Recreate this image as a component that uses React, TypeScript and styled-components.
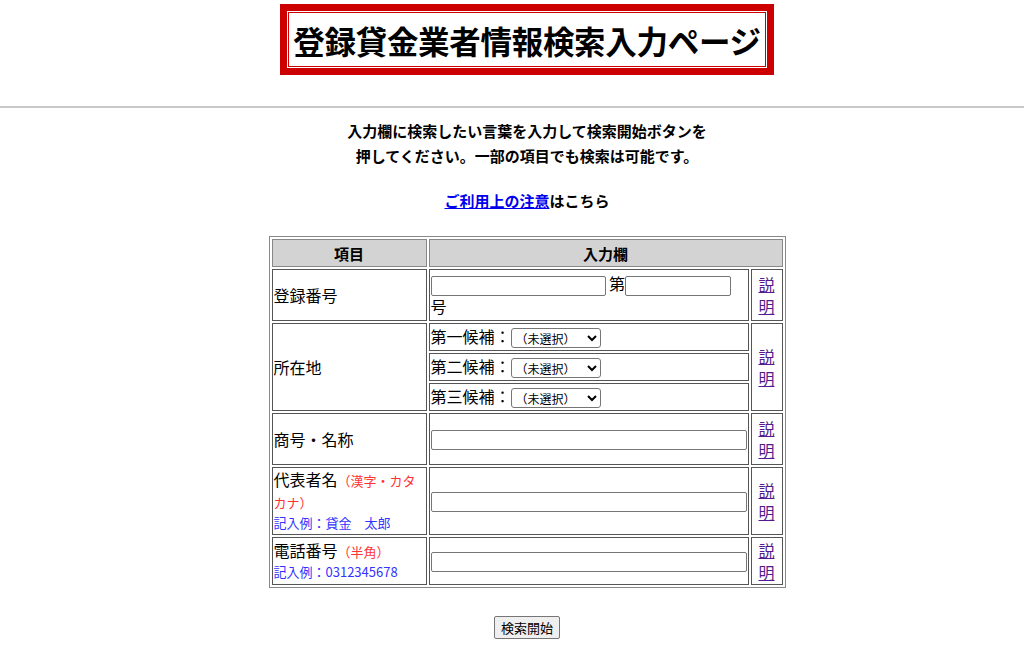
import React from "react";
import styled, { createGlobalStyle } from "styled-components";

const Global = createGlobalStyle`
  body { margin: 0; font-family: "Noto Sans CJK JP", "Noto Sans", sans-serif; color: #000; background: #fff; }
`;

const Page = styled.div`
  display: flex; flex-direction: column; align-items: center; padding-top: 4px;
`;
const Centered = styled.div`
  display: flex; flex-direction: column; align-items: center; padding-left: 30px;
`;
const TitleFrame = styled.div`
  border: 7px solid #cc0000; background: #fff; padding: 1px;
`;
const TitleInner = styled.h1`
  margin: 0; border: 1px solid #cc0000; padding: 5px 4px 4px;
  font-size: 31.5px; font-weight: 700; line-height: 44px; letter-spacing: -0.3px;
`;
const Rule = styled.hr`
  width: 100%; margin: 31px 0 0; border: none; border-top: 2px solid #c8c8c8;
`;
const Intro = styled.p`
  margin: 10px 0 0; font-size: 15px; font-weight: 700; line-height: 25px; text-align: center;
`;
const Notice = styled.p`
  margin: 22px 0 0; font-size: 15px; font-weight: 700; text-align: center;
  a { color: #0000ee; }
`;
const Table = styled.table`
  margin-top: 25px; width: 517px; border: 1px solid #888; border-spacing: 2px;
  font-size: 16px;
`;
const Th = styled.th<{ w?: number }>`
  background: #d3d3d3; border: 1px solid #888; height: 26px; font-size: 15px; padding: 0;
  width: ${(p) => (p.w ? p.w + "px" : "auto")};
`;
const Td = styled.td<{ h?: number; center?: boolean; w?: number }>`
  border: 1px solid #555; padding: 1px 1px; line-height: 21px;
  height: ${(p) => (p.h ? p.h + "px" : "auto")};
  width: ${(p) => (p.w ? p.w + "px" : "auto")};
  text-align: ${(p) => (p.center ? "center" : "left")};
`;
const Help = styled.a`
  color: #551a8b; text-decoration: underline; display: inline-block; width: 17px; line-height: 22px; font-size: 16px;
`;
const Text = styled.input<{ w: number }>`
  width: ${(p) => p.w}px; height: 20px; box-sizing: border-box; border: 1px solid #767676; border-radius: 2px;
  padding: 1px 2px; font-size: 13px; vertical-align: middle;
`;
const Select = styled.select`
  width: 90px; height: 20px; font-size: 12px; border: 1px solid #767676; border-radius: 3px; background: #fff;
  vertical-align: middle; font-family: inherit;
`;
const Red = styled.span`
  color: #ff3333; font-size: 13px;
`;
const Blue = styled.div`
  color: #3333ff; font-size: 13px; line-height: 20px;
`;
const Button = styled.button`
  margin-top: 28px; font-size: 13px; padding: 1px 6px; height: 23px; font-family: inherit;
  border: 1px solid #767676; border-radius: 2px; background: #efefef;
`;

const cand = ["第一候補", "第二候補", "第三候補"];

export default function App() {
  const help = <Help href="#">説明</Help>;
  return (
    <>
      <Global />
      <Page>
        <Centered><TitleFrame><TitleInner>登録貸金業者情報検索入力ページ</TitleInner></TitleFrame></Centered>
        <Rule />
        <Centered>
          <Intro>入力欄に検索したい言葉を入力して検索開始ボタンを<br />押してください。一部の項目でも検索は可能です。</Intro>
          <Notice><a href="#">ご利用上の注意</a>はこちら</Notice>
          <Table>
            <tbody>
              <tr><Th w={153}>項目</Th><Th colSpan={2}>入力欄</Th></tr>
              <tr>
                <Td h={48}>登録番号</Td>
                <Td><Text w={175} /> 第<Text w={106} /><br />号</Td>
                <Td center w={28}>{help}</Td>
              </tr>
              {cand.map((c, i) => (
                <tr key={c}>
                  {i === 0 && <Td rowSpan={3}>所在地</Td>}
                  <Td h={24}>{c}：<Select><option>（未選択）</option></Select></Td>
                  {i === 0 && <Td rowSpan={3} center w={28}>{help}</Td>}
                </tr>
              ))}
              <tr>
                <Td h={48}>商号・名称</Td>
                <Td><Text w={316} /></Td>
                <Td center w={28}>{help}</Td>
              </tr>
              <tr>
                <Td>代表者名<Red>（漢字・カタカナ）</Red><Blue>記入例：貸金　太郎</Blue></Td>
                <Td><Text w={316} /></Td>
                <Td center w={28}>{help}</Td>
              </tr>
              <tr>
                <Td>電話番号<Red>（半角）</Red><Blue>記入例：0312345678</Blue></Td>
                <Td><Text w={316} /></Td>
                <Td center w={28}>{help}</Td>
              </tr>
            </tbody>
          </Table>
          <Button>検索開始</Button>
        </Centered>
      </Page>
    </>
  );
}
